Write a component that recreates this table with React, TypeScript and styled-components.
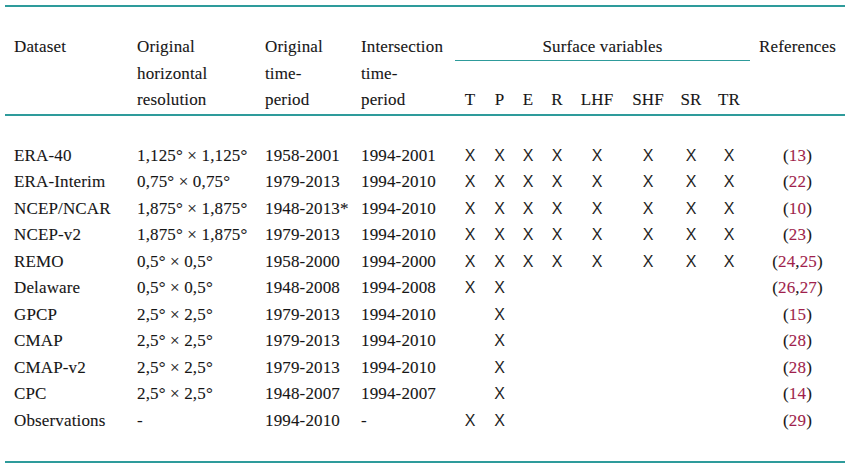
import React from "react";
import styled, { createGlobalStyle } from "styled-components";

const GlobalStyle = createGlobalStyle`
  html, body { margin: 0; padding: 0; background: #ffffff; }
  body {
    font-family: "Liberation Serif", "Times New Roman", serif;
    color: #1a1a1a;
  }
`;

const COLS =
  "124px 128px 96px 102px 30px 29px 28px 30px 50px 52px 34px 42px 95px";
const TEAL = "#2e9b9b";
const CRIMSON = "#a01f4c";
const SERIF = `"Liberation Serif", "Times New Roman", serif`;

const Page = styled.div`
  padding: 5px 5px 0 5px;
  width: 840px;
`;

const Table = styled.div`
  width: 840px;
  border-top: 2px solid ${TEAL};
  border-bottom: 2px solid ${TEAL};
  font-family: ${SERIF};
  font-size: 17px;
  letter-spacing: 0.15px;
  color: #161616;
  -webkit-text-stroke: 0.1px #161616;
`;

const Head = styled.div`
  display: grid;
  grid-template-columns: ${COLS};
  grid-template-rows: repeat(3, 26.5px);
  padding-top: 27px;
  border-bottom: 2px solid ${TEAL};
  line-height: 26.5px;
`;

const HeadCell = styled.div<{
  $col: number;
  $row?: number;
  $span?: number;
  $rows?: number;
  $center?: boolean;
  $pad?: number;
}>`
  font-family: ${SERIF};
  grid-column: ${(p) => p.$col} / span ${(p) => p.$span ?? 1};
  grid-row: ${(p) => p.$row ?? 1} / span ${(p) => p.$rows ?? 1};
  padding-left: ${(p) => (p.$center ? 0 : p.$pad ?? 8)}px;
  text-align: ${(p) => (p.$center ? "center" : "left")};
  white-space: nowrap;
`;

const GroupTitle = styled(HeadCell)`
  border-bottom: 1.5px solid ${TEAL};
  height: 26.5px;
  box-sizing: border-box;
`;

const Body = styled.div`
  padding: 27px 0 27px 0;
`;

const Row = styled.div`
  display: grid;
  grid-template-columns: ${COLS};
  height: 26.5px;
  line-height: 26.5px;
`;

const TextCell = styled.div<{ $pad?: number }>`
  font-family: ${SERIF};
  padding-left: ${(p) => p.$pad ?? 8}px;
  white-space: nowrap;
`;

const Mark = styled.div`
  text-align: center;
  font-family: "Liberation Sans", Arial, sans-serif;
  font-size: 16px;
  letter-spacing: 0;
  color: #1f1f1f;
  -webkit-text-stroke: 0;
`;

const Ref = styled.div`
  font-family: ${SERIF};
  text-align: center;
  white-space: nowrap;
`;

const Num = styled.span`
  color: ${CRIMSON};
  -webkit-text-stroke: 0.1px ${CRIMSON};
`;

type Data = {
  name: string;
  res: string;
  orig: string;
  inter: string;
  marks: boolean[];
  refs: string[];
};

const all = [true, true, true, true, true, true, true, true];
const tp = [true, true, false, false, false, false, false, false];
const p = [false, true, false, false, false, false, false, false];

const rows: Data[] = [
  { name: "ERA-40", res: "1,125° × 1,125°", orig: "1958-2001", inter: "1994-2001", marks: all, refs: ["13"] },
  { name: "ERA-Interim", res: "0,75° × 0,75°", orig: "1979-2013", inter: "1994-2010", marks: all, refs: ["22"] },
  { name: "NCEP/NCAR", res: "1,875° × 1,875°", orig: "1948-2013*", inter: "1994-2010", marks: all, refs: ["10"] },
  { name: "NCEP-v2", res: "1,875° × 1,875°", orig: "1979-2013", inter: "1994-2010", marks: all, refs: ["23"] },
  { name: "REMO", res: "0,5° × 0,5°", orig: "1958-2000", inter: "1994-2000", marks: all, refs: ["24", "25"] },
  { name: "Delaware", res: "0,5° × 0,5°", orig: "1948-2008", inter: "1994-2008", marks: tp, refs: ["26", "27"] },
  { name: "GPCP", res: "2,5° × 2,5°", orig: "1979-2013", inter: "1994-2010", marks: p, refs: ["15"] },
  { name: "CMAP", res: "2,5° × 2,5°", orig: "1979-2013", inter: "1994-2010", marks: p, refs: ["28"] },
  { name: "CMAP-v2", res: "2,5° × 2,5°", orig: "1979-2013", inter: "1994-2010", marks: p, refs: ["28"] },
  { name: "CPC", res: "2,5° × 2,5°", orig: "1948-2007", inter: "1994-2007", marks: p, refs: ["14"] },
  { name: "Observations", res: "-", orig: "1994-2010", inter: "-", marks: tp, refs: ["29"] },
];

const vars = ["T", "P", "E", "R", "LHF", "SHF", "SR", "TR"];

export default function App() {
  return (
    <Page>
      <GlobalStyle />
      <Table>
        <Head>
          <HeadCell $col={1} $pad={9}>Dataset</HeadCell>
          <HeadCell $col={2} $rows={3}>
            Original
            <br />
            horizontal
            <br />
            resolution
          </HeadCell>
          <HeadCell $col={3} $rows={3}>
            Original
            <br />
            time-
            <br />
            period
          </HeadCell>
          <HeadCell $col={4} $rows={3}>
            Intersection
            <br />
            time-
            <br />
            period
          </HeadCell>
          <GroupTitle $col={5} $span={8} $center>
            Surface variables
          </GroupTitle>
          {vars.map((v, i) => (
            <HeadCell key={v} $col={5 + i} $row={3} $center>
              {v}
            </HeadCell>
          ))}
          <HeadCell $col={13} $center>
            References
          </HeadCell>
        </Head>
        <Body>
          {rows.map((r) => (
            <Row key={r.name}>
              <TextCell $pad={9}>{r.name}</TextCell>
              <TextCell>{r.res}</TextCell>
              <TextCell>{r.orig}</TextCell>
              <TextCell>{r.inter}</TextCell>
              {r.marks.map((m, i) => (
                <Mark key={i}>{m ? "X" : ""}</Mark>
              ))}
              <Ref>
                (
                {r.refs.map((n, i) => (
                  <React.Fragment key={n}>
                    {i > 0 && ","}
                    <Num>{n}</Num>
                  </React.Fragment>
                ))}
                )
              </Ref>
            </Row>
          ))}
        </Body>
      </Table>
    </Page>
  );
}
